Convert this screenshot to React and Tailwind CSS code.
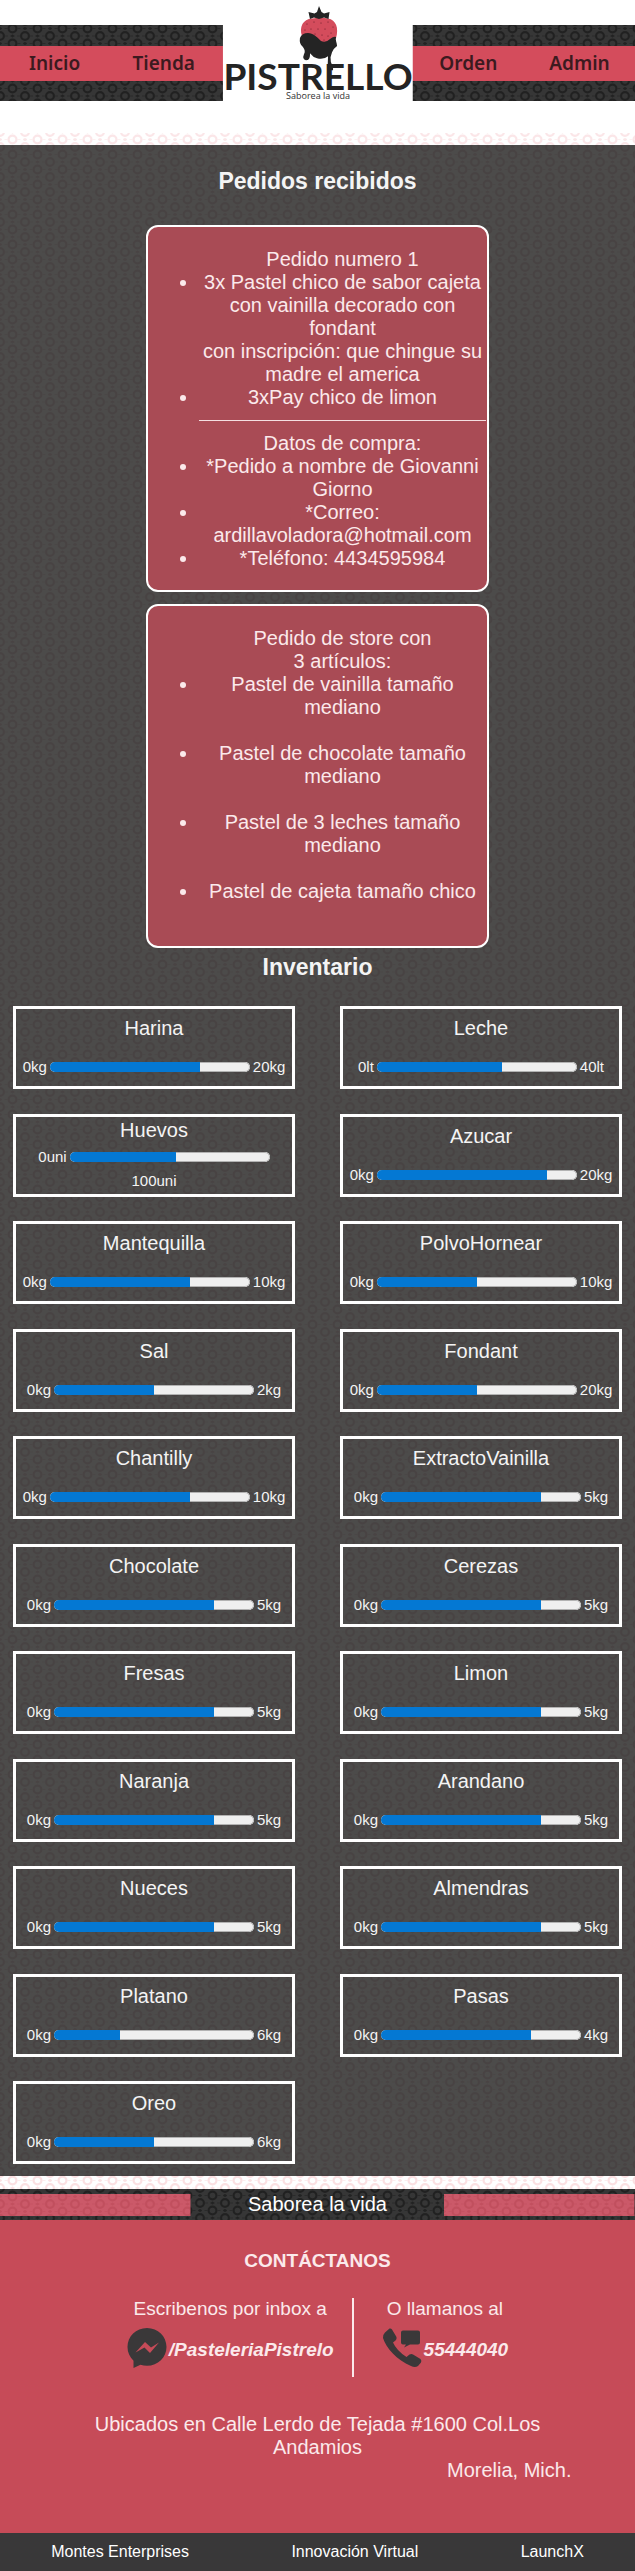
// Ring wallpaper: a 25x15 tile, shifted vertically by `offset`.
function Texture({ id, ring, base, offset }) {
  return (
    <svg className="absolute inset-0 h-full w-full" aria-hidden="true">
      <defs>
        <pattern id={id} y={offset} width="25" height="15" patternUnits="userSpaceOnUse">
          <rect width="25" height="15" fill={base} />
          <g fill="none" stroke={ring} strokeWidth="2.2">
            <circle cx="12.5" cy="7.5" r="3.900" />
            <circle cx="0" cy="0" r="3.900" />
            <circle cx="25" cy="0" r="3.900" />
            <circle cx="0" cy="15" r="3.900" />
            <circle cx="25" cy="15" r="3.900" />
          </g>
          <path
            d="M10.500 0l2-1.200L14.500 0l-2 1.200zM10.500 15l2-1.200L14.500 15l-2 1.200zM0 6.300l2 1.200L0 8.700zM25 6.300l-2 1.200L25 8.700zM5 0h3M17 0h3M5 15h3M17 15h3M4.500 7.500h3M17.500 7.500h3"
            fill={ring}
            stroke={ring}
            strokeWidth="0.6"
          />
        </pattern>
      </defs>
      <rect width="100%" height="100%" fill={`url(#${id})`} />
    </svg>
  );
}

const SEEDS = [
  [84, 24], [91, 22], [98, 23], [105, 22], [110, 27], [82, 30], [88, 29], [95, 29],
  [102, 29], [108, 33], [92, 34], [99, 35], [105, 36], [101, 40],
];

function Logo() {
  return (
    <svg viewBox="0 0 190 102" className="block h-auto w-full" role="img" aria-label="Pistrello, Saborea la vida">
      <rect width="190" height="102" fill="#fff" />
      <path d="M79 36C76 27 80 19 89 18.500C94 17.500 101 17.500 105 18.500C113 20 116 28 113 38L103 46H90Z" fill="#d44c5c" />
      <g fill="#a93a48">
        {SEEDS.map(([x, y]) => (
          <circle key={`${x}-${y}`} cx={x} cy={y} r="0.900" />
        ))}
      </g>
      <path d="M87 19L85.500 12L91.500 13.500L94 12L96 6L98.500 12L101 13.500L106.500 12L105.500 19L101 17.500L96 19L91 17.500Z" fill="#242424" />
      <path
        d="M77 38Q79 33 85 33C90 33 94 37 98 41Q103 43 107 39Q111 36 113 37C112 40 114 43 114 46Q110 49 109 52L107.500 57Q107 62 110 67V70H104.500L105 56Q100 60 94 58Q90 57 87 53V55Q87 60 83 60Q79 59 81 54Q83 51 80 47Q76 44 77 38Z"
        fill="#242424"
      />
      <text x="95" y="90" textAnchor="middle" fontFamily="Lato, sans-serif" fontWeight="700" fontSize="37" fill="#242424">PISTRELLO</text>
      <text x="95" y="99" textAnchor="middle" fontFamily="'Open Sans', sans-serif" fontSize="9" fill="#333">Saborea la vida</text>
    </svg>
  );
}

function MessengerIcon() {
  return (
    <svg viewBox="0 0 40 40" className="size-10 shrink-0" aria-hidden="true">
      <path d="M20 0C9 0 0.500 8.500 0.500 19c0 5.500 2.300 10.200 6 13.700V40l7-3.200c2 .7 4.200 1 6.500 1 11 0 19.500-8.300 19.500-18.800S31 0 20 0Z" fill="#3a3839" />
      <path d="M8.500 24.500L18 14l6 5.500L32 14.500 23 25l-5.500-5.500Z" fill="#c64b58" />
    </svg>
  );
}

function PhoneIcon() {
  return (
    <svg viewBox="0 0 40 40" className="size-10 shrink-0" aria-hidden="true">
      <path d="M3 4.500L7.500 .5Q9 0 10 1.500L14.500 9Q15 11 13.500 12.500L11 14.500Q14.500 22.500 24.500 29L27.500 26.500Q29.500 25.500 31 26.500L38.500 31Q40 32.500 39 34.500L36 38Q33 40 29 38C15 32 4 20 1 10Q.5 7 3 4.500Z" fill="#3a3839" />
      <path d="M21 2.500H36Q38 2.500 38 4.500V14.500Q38 16.500 36 16.500H28L22 19.500L24 16.500H21Q19 16.500 19 14.500V4.500Q19 2.500 21 2.500Z" fill="#3a3839" />
    </svg>
  );
}

function NavLink({ children }) {
  return <a href="#" className="flex-1 text-center">{children}</a>;
}

function OrderCard({ children }) {
  return (
    <article className="w-[54%] rounded-xl border-2 border-white bg-[#a94b55] pt-[21px] pr-px pb-5 pl-[51px] text-center text-[20px] leading-[23px] text-[#fbe9eb]">
      {children}
    </article>
  );
}

const STOCK = [
  ["Harina", 0.75, "0kg", "20kg"],
  ["Leche", 0.625, "0lt", "40lt"],
  ["Huevos", 0.53, "0uni", "100uni"],
  ["Azucar", 0.85, "0kg", "20kg"],
  ["Mantequilla", 0.7, "0kg", "10kg"],
  ["PolvoHornear", 0.5, "0kg", "10kg"],
  ["Sal", 0.5, "0kg", "2kg"],
  ["Fondant", 0.5, "0kg", "20kg"],
  ["Chantilly", 0.7, "0kg", "10kg"],
  ["ExtractoVainilla", 0.8, "0kg", "5kg"],
  ["Chocolate", 0.8, "0kg", "5kg"],
  ["Cerezas", 0.8, "0kg", "5kg"],
  ["Fresas", 0.8, "0kg", "5kg"],
  ["Limon", 0.8, "0kg", "5kg"],
  ["Naranja", 0.8, "0kg", "5kg"],
  ["Arandano", 0.8, "0kg", "5kg"],
  ["Nueces", 0.8, "0kg", "5kg"],
  ["Almendras", 0.8, "0kg", "5kg"],
  ["Platano", 0.33, "0kg", "6kg"],
  ["Pasas", 0.75, "0kg", "4kg"],
  ["Oreo", 0.5, "0kg", "6kg"],
];

function StockCard({ name, value, min, max }) {
  const twoLines = max.length > 5;
  return (
    <article className={`h-[83px] border-[3px] border-white text-center text-[#f4f4f4] ${twoLines ? "pt-0.5" : "pt-2"}`}>
      <h3 className="text-[20px] leading-[23px]">{name}</h3>
      <div className={`flex flex-wrap items-center justify-center gap-x-[3px] gap-y-1 text-[15px] leading-5 ${twoLines ? "mt-[5px]" : "mt-[17px]"}`}>
        <span>{min}</span>
        <progress
          aria-label={name}
          value={value}
          max="1"
          className="h-[10px] w-[200px] appearance-none overflow-hidden rounded-[5px] bg-[#efefef] [&::-webkit-progress-bar]:bg-[#efefef] [&::-webkit-progress-bar]:shadow-[inset_0_0_0_1px_#b2b2b2] [&::-webkit-progress-bar]:rounded-[5px] [&::-webkit-progress-value]:bg-[#0478d3]"
        />
        <span className={twoLines ? "w-full" : ""}>{max}</span>
      </div>
    </article>
  );
}

export default function App() {
  return (
    <div className="w-full bg-white font-['Liberation_Sans',Arial,sans-serif]">
      <header className="relative h-[133px] pt-[25px]">
        <nav className="relative flex h-[76px] items-center">
          <Texture id="tex-nav" ring="#212121" base="#363636" offset={11} />
          <div className="relative flex h-[35px] w-full items-center justify-between bg-[#d44c5c] font-['Noto_Sans',sans-serif] text-[19px] font-semibold text-[#3c1a1f]">
            <div className="flex w-[35%] pr-1"><NavLink>Inicio</NavLink><NavLink>Tienda</NavLink></div>
            <div className="flex w-[35%]"><NavLink>Orden</NavLink><NavLink>Admin</NavLink></div>
          </div>
        </nav>
        <div className="absolute top-0 left-1/2 w-[30%] -translate-x-1/2"><Logo /></div>
      </header>

      <div className="relative h-3"><Texture id="tex-top" ring="#fbe6e8" base="#ffffff" offset={14} /></div>

      <main className="relative pb-3">
        <Texture id="tex-main" ring="#484343" base="#4c4b4a" offset={2} />
        <div className="relative">
          <h1 className="pt-[22px] text-center text-[23px] leading-7 font-bold text-[#f4f4f4]">Pedidos recibidos</h1>
          <div className="mt-[30px] flex flex-col items-center gap-3">
            <OrderCard>
              <h2>Pedido numero 1</h2>
              <ul className="list-disc">
                <li>3x Pastel chico de sabor cajeta con vainilla decorado con fondant<br />con inscripción: que chingue su madre el america</li>
                <li>3xPay chico de limon</li>
              </ul>
              <hr className="my-[11px] border-[#f5dfe1]" />
              <h2>Datos de compra:</h2>
              <ul className="list-disc">
                <li>*Pedido a nombre de Giovanni Giorno</li>
                <li>*Correo: ardillavoladora@hotmail.com</li>
                <li>*Teléfono: 4434595984</li>
              </ul>
            </OrderCard>
            <OrderCard>
              <h2>Pedido de store con<br />3 artículos:</h2>
              <ul className="list-disc space-y-[23px] pb-[23px]">
                <li>Pastel de vainilla tamaño mediano</li>
                <li>Pastel de chocolate tamaño mediano</li>
                <li>Pastel de 3 leches tamaño mediano</li>
                <li>Pastel de cajeta tamaño chico</li>
              </ul>
            </OrderCard>
          </div>
          <h1 className="mt-[5px] text-center text-[23px] leading-7 font-bold text-[#f4f4f4]">Inventario</h1>
          <div className="mt-[25px] grid min-h-[1158px] grid-cols-2 content-between gap-x-[45px] px-[13px]">
            {STOCK.map(([name, value, min, max]) => (
              <StockCard key={name} name={name} value={value} min={min} max={max} />
            ))}
          </div>
        </div>
      </main>

      <div className="relative h-[13px]"><Texture id="tex-bottom" ring="#fbe0e2" base="#ffffff" offset={12} /></div>

      <footer className="text-[#fbe9eb]">
        <div className="relative flex h-[31px] items-center justify-between">
          <Texture id="tex-bar" ring="#212121" base="#363636" offset={14} />
          <div className="relative h-[22px] w-[30%]"><Texture id="tex-left" ring="#c14f5e" base="#cb5969" offset={10} /></div>
          <p className="relative text-[20px] leading-[23px] text-white">Saborea la vida</p>
          <div className="relative h-[22px] w-[30%]"><Texture id="tex-right" ring="#c14f5e" base="#cb5969" offset={10} /></div>
        </div>

        <section className="bg-[#c64b58] pt-[29px] pb-[51px]">
          <h2 className="text-center text-[19px] leading-6 font-bold">CONTÁCTANOS</h2>
          <div className="mt-[25px] flex justify-center text-[19px] leading-[22px]">
            <div className="pr-[18px] text-center">
              <p>Escribenos por inbox a</p>
              <a href="#" className="mt-2 flex items-center gap-0.5 font-bold italic"><MessengerIcon /><span className="mt-1">/PasteleriaPistrelo</span></a>
            </div>
            <div className="h-[79px] w-0.5 bg-[#fbe9eb]" />
            <div className="pl-7 text-center">
              <p>O llamanos al</p>
              <a href="#" className="mt-2 flex items-center gap-0.5 font-bold italic"><PhoneIcon /><span className="mt-1">55444040</span></a>
            </div>
          </div>
          <address className="mx-auto mt-9 w-[80%] text-center text-[20px] leading-[23px] not-italic">
            <p>Ubicados en Calle Lerdo de Tejada #1600 Col.Los Andamios</p>
            <p className="text-right">Morelia, Mich.</p>
          </address>
        </section>

        <div className="flex h-[38px] items-center justify-around bg-[#393839] text-[16px] text-white">
          <span>Montes Enterprises</span>
          <span>Innovación Virtual</span>
          <span>LaunchX</span>
        </div>
      </footer>
    </div>
  );
}
